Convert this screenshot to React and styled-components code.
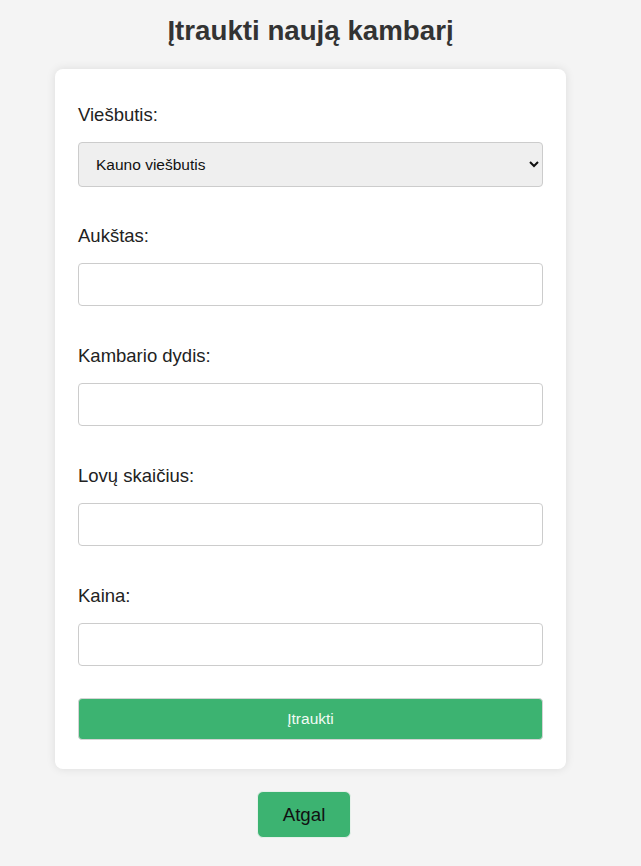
import React from "react";
import styled, { createGlobalStyle } from "styled-components";

const Global = createGlobalStyle`
  html, body {
    margin: 0;
    padding: 0;
    background: #f4f4f4;
    font-family: "Liberation Sans", Arial, sans-serif;
  }
  * { box-sizing: border-box; }
`;

const Page = styled.div`
  width: 621px;
  display: flex;
  flex-direction: column;
  align-items: center;
  padding-top: 15px;
  padding-bottom: 28px;
`;

const Title = styled.h1`
  margin: 0 0 22px;
  font-size: 27.7px;
  font-weight: bold;
  color: #333;
  line-height: 32px;
`;

const Card = styled.form`
  width: 511px;
  background: #fff;
  border-radius: 8px;
  box-shadow: 0 0 10px rgba(0, 0, 0, 0.1);
  padding: 35px 23px 29px;
  display: flex;
  flex-direction: column;
`;

const Field = styled.div`
  display: flex;
  flex-direction: column;
  margin-bottom: ${(p) => p.$gap || 39}px;
`;

const Label = styled.label`
  font-size: 18.5px;
  line-height: 21px;
  color: #222;
  margin-bottom: 17px;
`;

const Select = styled.select`
  height: 45px;
  width: 100%;
  padding: 0 8px 0 13px;
  font-family: "Liberation Sans", Arial, sans-serif;
  font-size: 15.5px;
  color: #111;
  background: #efefef;
  border: 1px solid #ccc;
  border-radius: 4px;
`;

const Input = styled.input`
  height: 43px;
  width: 100%;
  padding: 0 10px;
  font-family: "Liberation Sans", Arial, sans-serif;
  font-size: 16px;
  background: #fff;
  border: 1px solid #ccc;
  border-radius: 4px;
`;

const Submit = styled.button`
  height: 42px;
  width: 100%;
  margin-top: -7px;
  background: #3cb371;
  color: #f2fbf5;
  border: 1px solid #d4d4d4;
  border-radius: 4px;
  font-family: "Liberation Sans", Arial, sans-serif;
  font-size: 15.5px;
`;

const BackRow = styled.div`
  display: flex;
  justify-content: center;
  margin-top: 22px;
  padding-right: 13px;
`;

const BackButton = styled.a`
  display: inline-flex;
  align-items: center;
  justify-content: center;
  height: 47px;
  padding: 0 25px;
  background: #3cb371;
  color: #111;
  border: 1px solid #e6f0ea;
  border-radius: 6px;
  font-size: 18.7px;
  text-decoration: none;
`;

export default function App() {
  return (
    <>
      <Global />
      <Page>
        <Title>Įtraukti naują kambarį</Title>
        <Card onSubmit={(e) => e.preventDefault()}>
          <Field $gap={38}>
            <Label>Viešbutis:</Label>
            <Select defaultValue="kaunas">
              <option value="kaunas">Kauno viešbutis</option>
            </Select>
          </Field>
          <Field>
            <Label>Aukštas:</Label>
            <Input type="text" />
          </Field>
          <Field>
            <Label>Kambario dydis:</Label>
            <Input type="text" />
          </Field>
          <Field>
            <Label>Lovų skaičius:</Label>
            <Input type="text" />
          </Field>
          <Field>
            <Label>Kaina:</Label>
            <Input type="text" />
          </Field>
          <Submit type="submit">Įtraukti</Submit>
        </Card>
        <BackRow>
          <BackButton href="#">Atgal</BackButton>
        </BackRow>
      </Page>
    </>
  );
}
